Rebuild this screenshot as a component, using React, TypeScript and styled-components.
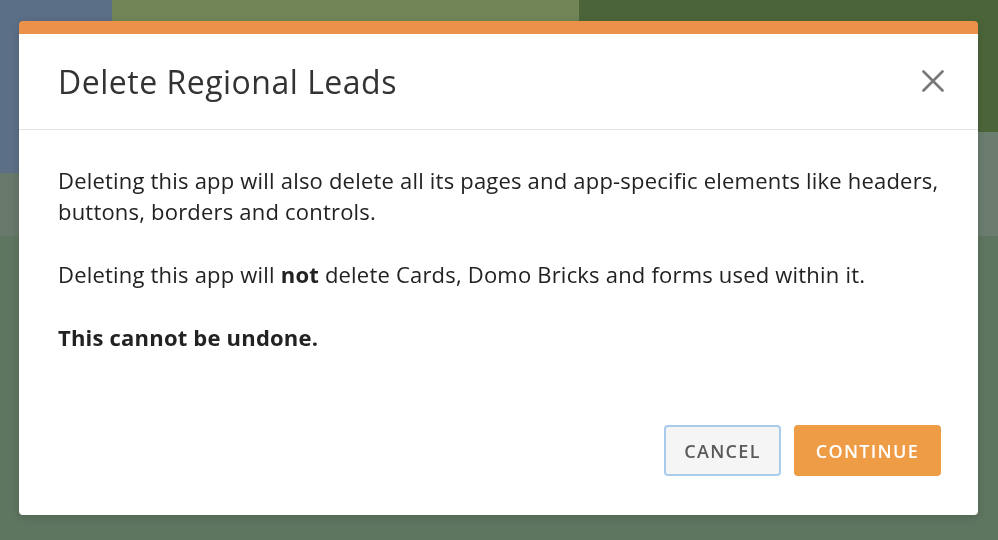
import React, { type FC } from 'react'
import styled, { createGlobalStyle } from 'styled-components'

const GlobalStyle = createGlobalStyle`
  html, body {
    margin: 0;
    padding: 0;
    width: 100%;
    height: 100%;
    overflow: hidden;
  }
  body {
    font-family: "Open Sans", "Noto Sans", sans-serif;
  }
`

const App: FC = () => {
  return <>
    <GlobalStyle />
    <Backdrop>
      <Tile $area="blue" $color="#5b6f86" />
      <Tile $area="mid" $color="#718557" />
      <Tile $area="dark" $color="#4b6539" />
      <Tile $area="bandl" $color="#67796a" />
      <Tile $area="bandr" $color="#6a7d6e" />
      <Tile $area="base" $color="#5e7560" />
    </Backdrop>
    <Overlay>
      <Modal role="dialog" aria-labelledby="delete_app_title">
        <Header>
          <Title id="delete_app_title">Delete Regional Leads</Title>
          <CloseButton type="button" aria-label="Close">
            <svg width="22" height="22" viewBox="0 0 22 22" fill="none">
              <path d="M1.5 1.5 L20.5 20.5 M20.5 1.5 L1.5 20.5" stroke="#777" strokeWidth="2.6" strokeLinecap="round" />
            </svg>
          </CloseButton>
        </Header>
        <Body>
          <Paragraph>
            Deleting this app will also delete all its pages and app-specific elements like headers,
            buttons, borders and controls.
          </Paragraph>
          <Paragraph>
            Deleting this app will <strong>not</strong> delete Cards, Domo Bricks and forms used within it.
          </Paragraph>
          <Paragraph><strong>This cannot be undone.</strong></Paragraph>
        </Body>
        <Footer>
          <Button type="button" $variant="cancel">Cancel</Button>
          <Button type="button" $variant="continue">Continue</Button>
        </Footer>
      </Modal>
    </Overlay>
  </>
}

const Backdrop = styled.div`
  position: fixed;
  inset: 0;
  display: grid;
  grid-template-columns: 112px 467px 1fr;
  grid-template-rows: 132px 41px 63px 1fr;
  grid-template-areas:
    "blue mid dark"
    "blue mid bandr"
    "bandl bandl bandr"
    "base base base";
`

const Tile = styled.div<{ $area: string, $color: string }>`
  grid-area: ${p => p.$area};
  background: ${p => p.$color};
`

const Overlay = styled.div`
  position: fixed;
  inset: 0;
  padding: 21px 20px 25px 19px;
  display: flex;
`

const Modal = styled.div`
  flex: 1;
  display: flex;
  flex-direction: column;
  background: #fff;
  border-top: 13px solid #ec9149;
  border-radius: 4px;
  box-shadow: 0 2px 8px rgba(0, 0, 0, 0.15);
`

const Header = styled.div`
  height: 95px;
  display: flex;
  align-items: center;
  justify-content: space-between;
  padding: 0 34px 0 39px;
  border-bottom: 1px solid #e4e4e4;
`

const Title = styled.h2`
  margin: 0;
  font-size: 32px;
  font-weight: 400;
  color: #333;
  letter-spacing: 0.5px;
`

const CloseButton = styled.button`
  border: 0;
  background: none;
  padding: 0;
  margin-top: -2px;
  display: flex;
  cursor: pointer;
`

const Body = styled.div`
  flex: 1;
  padding: 35px 39px 0 39px;
`

const Paragraph = styled.p`
  margin: 0 0 32px;
  font-size: 22px;
  line-height: 31px;
  letter-spacing: 0.2px;
  color: #222;
  strong {
    font-weight: 700;
  }
`

const Footer = styled.div`
  display: flex;
  justify-content: flex-end;
  gap: 13px;
  padding: 0 37px 39px 0;
`

const Button = styled.button<{ $variant: 'cancel' | 'continue' }>`
  height: 51px;
  padding: 0 ${p => p.$variant === 'cancel' ? '18px' : '20px'};
  font-family: inherit;
  font-size: 18px;
  font-weight: 600;
  letter-spacing: 1.3px;
  text-transform: uppercase;
  border-radius: 4px;
  cursor: pointer;
  border: 2px solid ${p => p.$variant === 'cancel' ? '#a9cced' : '#ee9c45'};
  background: ${p => p.$variant === 'cancel' ? '#f5f5f5' : '#ee9c45'};
  color: ${p => p.$variant === 'cancel' ? '#5a5a5a' : '#fff'};
`

export default App
